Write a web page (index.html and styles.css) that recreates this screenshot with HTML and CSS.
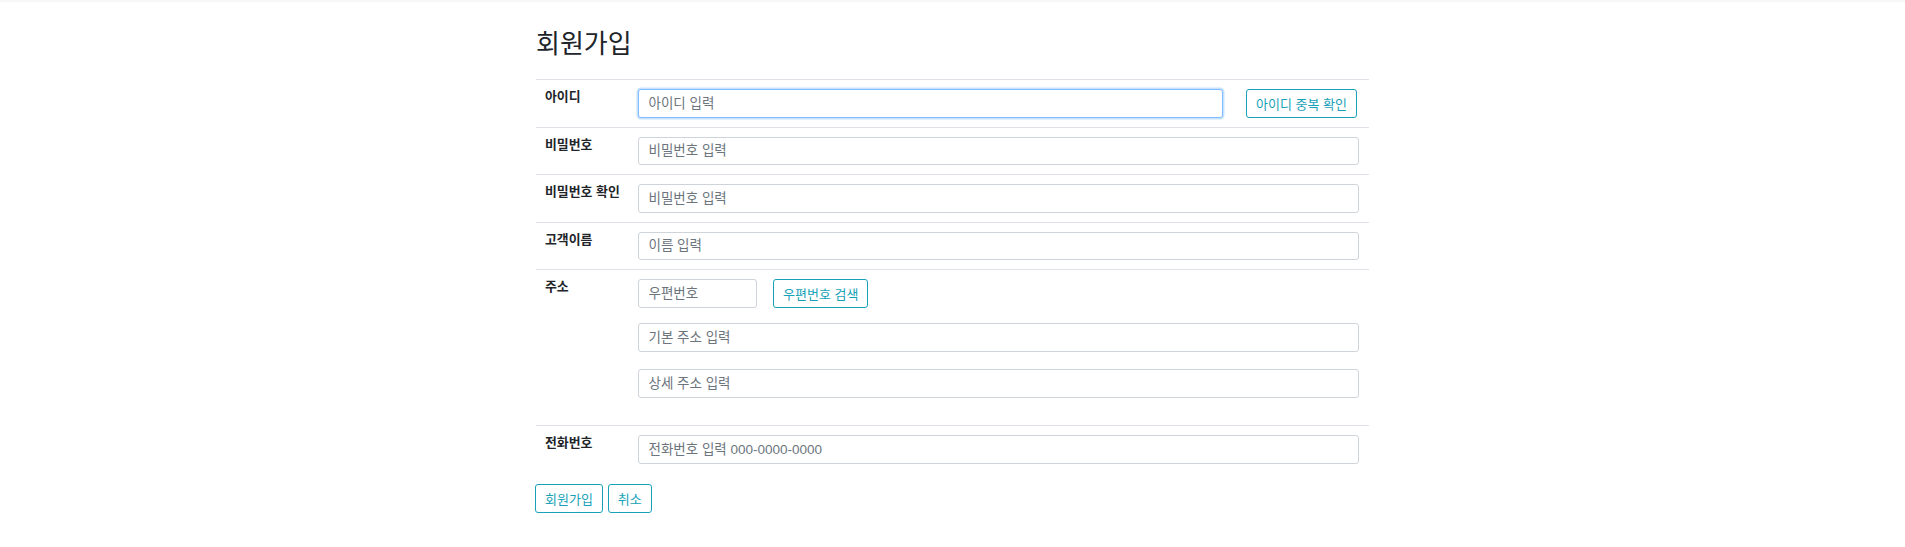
FILE: index.html
```html
<!DOCTYPE html>
<html lang="ko">
<head>
<meta charset="utf-8">
<title>회원가입</title>
<link rel="stylesheet" href="styles.css">
</head>
<body>
<div class="topbar"></div>
<div class="container">
  <h2 class="title">회원가입</h2>
  <div class="form">
    <div class="row">
      <div class="label">아이디</div>
      <div class="field inline">
        <input class="input grow is-focused" type="text" placeholder="아이디 입력">
        <button class="btn btn-check" type="button">아이디 중복 확인</button>
      </div>
    </div>
    <div class="row">
      <div class="label">비밀번호</div>
      <div class="field"><input class="input" type="password" placeholder="비밀번호 입력"></div>
    </div>
    <div class="row">
      <div class="label">비밀번호 확인</div>
      <div class="field"><input class="input" type="password" placeholder="비밀번호 입력"></div>
    </div>
    <div class="row">
      <div class="label">고객이름</div>
      <div class="field"><input class="input" type="text" placeholder="이름 입력"></div>
    </div>
    <div class="row row-address">
      <div class="label">주소</div>
      <div class="field">
        <div class="inline">
          <input class="input input-zip" type="text" placeholder="우편번호">
          <button class="btn btn-zip" type="button">우편번호 검색</button>
        </div>
        <input class="input addr-basic" type="text" placeholder="기본 주소 입력">
        <input class="input addr-detail" type="text" placeholder="상세 주소 입력">
      </div>
    </div>
    <div class="row row-last">
      <div class="label">전화번호</div>
      <div class="field"><input class="input" type="text" placeholder="전화번호 입력 000-0000-0000"></div>
    </div>
  </div>
  <div class="actions">
    <button class="btn" type="submit">회원가입</button>
    <button class="btn" type="button">취소</button>
  </div>
</div>
</body>
</html>
```

FILE: styles.css
```css
* { box-sizing: border-box; }

html, body {
  margin: 0;
  padding: 0;
  background: #ffffff;
  color: #212529;
  font-family: "Noto Sans CJK KR", "Noto Sans", sans-serif;
}

.topbar {
  height: 2px;
  background: #f7f7f7;
}

.container {
  width: 833px;
  margin: 0 auto;
}

.title {
  margin: 24.5px 0 23.5px 0;
  font-size: 26px;
  line-height: 29px;
  font-weight: 400;
  color: #212529;
}

.row {
  display: grid;
  grid-template-columns: 93px 1fr;
  border-top: 1px solid #dee2e6;
  padding: 9px 10px 9px 9px;
}

.label {
  font-size: 12.9px;
  line-height: 14px;
  font-weight: 700;
  color: #212529;
  white-space: nowrap;
}

.field {
  display: flex;
  flex-direction: column;
}

.inline {
  display: flex;
  flex-direction: row;
  align-items: center;
}

.input {
  display: block;
  width: 100%;
  height: 28.5px;
  padding: 0 9.5px;
  border: 1px solid #ced4da;
  border-radius: 3px;
  background: #ffffff;
  font-family: "Liberation Sans", "Noto Sans CJK KR", sans-serif;
  font-size: 13.5px;
  color: #495057;
  outline: none;
}

.input::placeholder {
  color: #6c757d;
  opacity: 1;
}

.input.grow {
  flex: 1;
  width: auto;
  min-width: 0;
}

.input.is-focused {
  border-color: #80bdff;
  box-shadow: 0 0 0 1.5px rgba(0, 123, 255, 0.22);
}

.input-zip {
  width: 119px;
}

.addr-basic {
  margin-top: 15.5px;
}

.addr-detail {
  margin-top: 17.5px;
  margin-bottom: 18.5px;
}

.btn {
  height: 28.5px;
  padding: 0 9px;
  border: 1px solid #17a2b8;
  border-radius: 3px;
  background: #ffffff;
  color: #17a2b8;
  font-family: inherit;
  font-size: 13px;
  line-height: 1;
  white-space: nowrap;
  cursor: pointer;
}

.btn-check {
  margin-left: 23px;
  margin-right: 2px;
}

.btn-zip {
  margin-left: 16px;
}

.actions {
  display: flex;
  gap: 5px;
  margin-top: 11.5px;
  margin-left: -1px;
}
```
